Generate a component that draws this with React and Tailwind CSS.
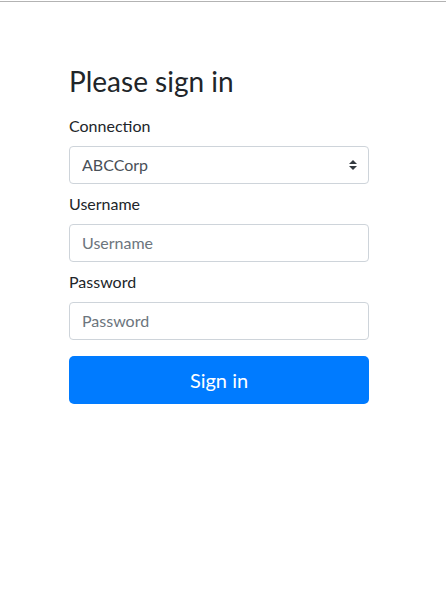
import React from "react";

const inputCls =
  "block w-full h-[38px] px-3 text-base text-[#495057] bg-white border border-[#ced4da] rounded placeholder:text-[#6c757d] outline-none";

export default function App() {
  return (
    <div className="min-h-[598px] bg-white pt-px font-['Lato',sans-serif] text-[#212529]">
      <div className="h-px bg-[#b3b3b3]" />
      <form className="w-[300px] ml-[69px] pt-[63px]" onSubmit={(e) => e.preventDefault()}>
        <h3 className="text-[28px] leading-[1.2] font-normal mb-[15px]">Please sign in</h3>
        <div className="mb-2">
          <label className="block text-base leading-6 mb-2">Connection</label>
          <div className="relative">
            <select className={inputCls + " appearance-none pr-8"} defaultValue="ABCCorp">
              <option>ABCCorp</option>
            </select>
            <svg className="absolute right-3 top-1/2 -translate-y-1/2 pointer-events-none" width="8" height="10" viewBox="0 0 4 5">
              <path fill="#343a40" d="M2 0L0 2h4zm0 5L0 3h4z" />
            </svg>
          </div>
        </div>
        <div className="mb-2">
          <label className="block text-base leading-6 mb-2">Username</label>
          <input className={inputCls} placeholder="Username" />
        </div>
        <div className="mb-4">
          <label className="block text-base leading-6 mb-2">Password</label>
          <input type="password" className={inputCls} placeholder="Password" />
        </div>
        <button type="submit" className="block w-full h-12 bg-[#007bff] text-white text-xl rounded-[5px]">
          Sign in
        </button>
      </form>
    </div>
  );
}
